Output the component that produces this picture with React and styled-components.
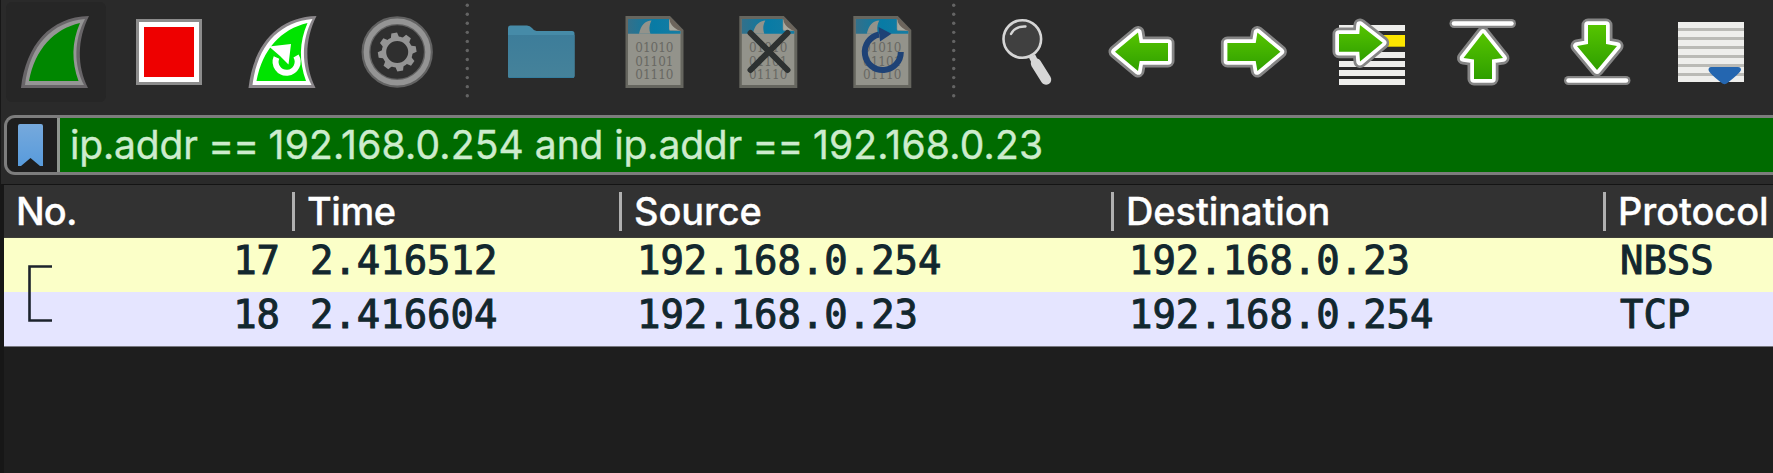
import React from 'react';
import styled, { createGlobalStyle } from 'styled-components';

const GlobalStyle = createGlobalStyle`
  * { box-sizing: border-box; }
  body { margin: 0; background: #1e1e1e; overflow: hidden; }
`;

const Window = styled.div`
  width: 1773px;
  height: 473px;
  display: flex;
  flex-direction: column;
  background: #2a2a2a;
  border-left: 1px solid #171717;
  font-family: Inter, 'Liberation Sans', sans-serif;
  overflow: hidden;
`;

const Toolbar = styled.div`
  display: flex;
  flex: 0 0 115px;
  margin-left: -1px;
`;

const Glyph = styled.svg`
  display: block;
  flex: none;
  width: ${(p) => p.$w}px;
  height: 110px;
`;

const FilterBar = styled.div`
  display: flex;
  flex: 0 0 60px;
  margin-left: 3px;
  border: 3px solid #7d7d7d;
  border-right: 0;
  border-radius: 11px 0 0 11px;
  background: #1e1e1e;
  overflow: hidden;
`;

const BookmarkButton = styled.div`
  display: flex;
  flex: 0 0 53px;
  align-items: flex-start;
  padding: 6px 0 0 11px;
  border-right: 3px solid #8f958f;
`;

const FilterInput = styled.div`
  flex: 1;
  padding: 1px 0 0 10px;
  background: #006b00;
  color: #cdeccd;
  font-size: 39px;
  line-height: 52px;
  -webkit-text-stroke: 0.4px #cdeccd;
  white-space: pre;
`;

const Token = styled.span`
  letter-spacing: ${(p) => p.$track}px;
`;

const PacketList = styled.div`
  flex: 1;
  margin-top: 9px;
  border-left: 3px solid #171717;
  border-top: 1px solid #141414;
  background: #1e1e1e;
`;

const HeaderRow = styled.div`
  display: flex;
  height: 53px;
  padding-top: 7px;
  background: #323232;
  border-bottom: 1px solid #3d3d38;
`;

const HeaderCell = styled.div`
  flex: none;
  width: ${(p) => p.$w}px;
  height: 39px;
  padding-left: ${(p) => (p.$first ? 9 : 12)}px;
  border-left: 3px solid ${(p) => (p.$first ? 'transparent' : '#b0b0b0')};
  color: #fff;
  font-size: 38px;
  font-weight: 500;
  line-height: 38px;
  letter-spacing: ${(p) => p.$track}px;
  -webkit-text-stroke: 0.3px #fff;
  white-space: nowrap;
`;

const Row = styled.div`
  display: flex;
  height: 54px;
  background: ${(p) => p.$bg};
  color: #12272e;
  font-family: 'DejaVu Sans Mono', monospace;
  font-size: 38.9px;
  line-height: 45px;
  -webkit-text-stroke: 1px #12272e;
  white-space: nowrap;
`;

const NumberCell = styled.div`
  display: flex;
  flex: none;
  justify-content: space-between;
  width: 306px;
  padding-right: 30px;
`;

const Cell = styled.div`
  flex: none;
  width: ${(p) => p.$w}px;
`;

const ListEnd = styled.div`
  height: 1px;
  background: #77777f;
`;

function Slot({ x, w, children }) {
  return <Glyph $w={w} viewBox={`${x} 0 ${w} 110`}>{children}</Glyph>;
}

function Dots({ x, w, cx }) {
  return (
    <Slot x={x} w={w}>
      {Array.from({ length: 11 }, (_, i) => (
        <circle key={i} cx={cx} cy={5.2 + i * 9.05} r="1.7" fill="#646464" />
      ))}
    </Slot>
  );
}

function Fin({ dx, rim, edge, fill }) {
  return (
    <g transform={`translate(${dx} 0)`}>
      <path d="M89 16C50 17 26 45 21 88H88C77 66 77 40 89 16Z" fill={rim} />
      <path d="M85 19C52 22 30 45 25 85H84C73.500 65 74 40 85 19Z" fill={edge} />
      <path d="M80 23C54 29 35 49 29 81H78.500C71.500 62 71.500 42 80 23Z" fill={fill} />
    </g>
  );
}

function Doc({ dx }) {
  return (
    <g transform={`translate(${dx} 0)`}>
      <path d="M625.500 16H670L683.500 30V88H625.500Z" fill="#66665f" />
      <path d="M628 19H669L680.500 31V85H628Z" fill="#93938b" />
      <path d="M628 19H669V29.500L680.500 31V33.700H628Z" fill="url(#sea)" />
      <path d="M639 33.700C641 25 645 21 651.500 20.500C649 25 649 30 650.500 33.700Z" fill="#93938b" />
      <path d="M670 17L683 30.500H670Z" fill="#6d655c" />
      <path d="M669.500 21V30.500H680C677 30 672 27 669.500 21Z" fill="#aaa99f" />
      <g fill="#686863" fontFamily="DejaVu Serif, serif" fontSize="12">
        <text x="635.300" y="52">01010</text>
        <text x="635.300" y="65.500">01101</text>
        <text x="635.300" y="79">01110</text>
      </g>
    </g>
  );
}

function OutlinedArrow({ d, transform, fill = 'url(#leafV)' }) {
  return (
    <g transform={transform} strokeLinejoin="round">
      <path d={d} fill="none" stroke="#858585" strokeWidth="13" />
      <path d={d} fill="none" stroke="#fff" strokeWidth="7.500" />
      <path d={d} fill={fill} />
    </g>
  );
}

function Defs() {
  return (
    <defs>
      <linearGradient id="leafV" x1="0" y1="0" x2="0" y2="1">
        <stop offset="0" stopColor="#56c400" />
        <stop offset="1" stopColor="#2f9f00" />
      </linearGradient>
      <linearGradient id="sea" x1="0" y1="0" x2="1" y2="0">
        <stop offset="0" stopColor="#33708a" />
        <stop offset=".5" stopColor="#087ba5" />
        <stop offset="1" stopColor="#177ca2" />
      </linearGradient>
      <linearGradient id="folderFront" x1="0" y1="0" x2="0" y2="1">
        <stop offset="0" stopColor="#3d7d9a" />
        <stop offset="1" stopColor="#45829a" />
      </linearGradient>
    </defs>
  );
}

const LEFT_ARROW = 'M1115 51.700L1138 32.500L1139.700 43H1168V61H1139.700L1138 71Z';

function Tools() {
  return (
    <Toolbar>
      <Slot x={0} w={113}>
        <Defs />
        <rect x="6" y="2" width="100" height="100" rx="6" fill="#262626" />
        <Fin dx={0} rim="#686568" edge="#959595" fill="#008700" />
      </Slot>
      <Slot x={113} w={114}>
        <rect x="136" y="19" width="66" height="66" fill="#8c8c8c" />
        <rect x="139" y="22" width="60" height="60" fill="#fff" />
        <rect x="144" y="27" width="50" height="50" fill="#ee0000" />
      </Slot>
      <Slot x={227} w={114}>
        <Fin dx={227.500} rim="#8b878b" edge="#fff" fill="#00e400" />
        <path d="M276.500 57.500A11 11 0 1 0 296 56" fill="none" stroke="#fff" strokeWidth="6" />
        <path d="M269 46.500L291 44L288.500 64.500L280 56Z" fill="#fff" />
      </Slot>
      <Slot x={341} w={114}>
        <circle cx="397.200" cy="52" r="31.200" fill="#2f2f2f" stroke="#626262" strokeWidth="9" />
        <circle cx="397.200" cy="52" r="30.800" fill="none" stroke="#949494" strokeWidth="5.500" />
        <circle cx="397.200" cy="52" r="13.200" fill="none" stroke="#949494" strokeWidth="4.400" />
        {Array.from({ length: 8 }, (_, i) => (
          <path key={i} d="M392.700 39L394.300 32.800H400.100L401.700 39Z" fill="#949494" transform={`rotate(${-9 + i * 45} 397.200 52)`} />
        ))}
      </Slot>
      <Dots x={455} w={27} cx={467.300} />
      <Slot x={482} w={116}>
        <path d="M508 28Q508 25.500 510.500 25.500H527Q530 25.500 532 28Q534 31 536.500 31H572Q574.500 31 574.500 33.500V76Q574.500 78 572.500 78H510Q508 78 508 76Z" fill="#468ba8" />
        <path d="M508 35H574.500V76Q574.500 78 572.500 78H510Q508 78 508 76Z" fill="url(#folderFront)" />
        <path d="M509 77.500H573.500" stroke="#347d9e" />
      </Slot>
      <Slot x={598} w={114}><Doc dx={0} /></Slot>
      <Slot x={712} w={114}>
        <Doc dx={113.800} />
        <path d="M750.500 33L787.500 70M787.500 33L750.500 70" stroke="#2d3131" strokeWidth="6" strokeLinecap="round" />
      </Slot>
      <Slot x={826} w={114}>
        <Doc dx={227.800} />
        <path d="M900.800 52A18 18 0 1 1 879 34.500" fill="none" stroke="#1e4276" strokeWidth="6" />
        <path d="M878.500 27L891.500 33.700L880 41.500Z" fill="#1e4276" />
      </Slot>
      <Dots x={940} w={28} cx={953.700} />
      <Slot x={968} w={116}>
        <path d="M1032 56L1035 62" stroke="#d6d6d6" strokeWidth="7" />
        <path d="M1036 63.500L1046 79.500" stroke="#d6d6d6" strokeWidth="10.500" strokeLinecap="round" />
        <circle cx="1022.300" cy="39" r="18.800" fill="#404040" stroke="#d6d6d6" strokeWidth="2.600" />
        <path d="M1011 34Q1015 26 1025.500 26.500" fill="none" stroke="#d6d6d6" strokeWidth="2.400" strokeLinecap="round" />
      </Slot>
      <Slot x={1084} w={114}><OutlinedArrow d={LEFT_ARROW} /></Slot>
      <Slot x={1198} w={114}><OutlinedArrow d={LEFT_ARROW} transform="translate(2395.400 0) scale(-1 1)" /></Slot>
      <Slot x={1312} w={114}>
        {[25, 52, 61, 70, 79].map((y) => (
          <rect key={y} x="1339" y={y} width="66" height="6" fill="#eeeeec" />
        ))}
        <rect x="1370" y="35" width="35" height="11.700" fill="#fce600" />
        <OutlinedArrow d="M1339 34H1359.300L1360 25L1382.700 42.700L1360 61.500L1359.300 51.700H1339Z" />
      </Slot>
      <Slot x={1426} w={114}>
        <path d="M1454 23.500H1511.500" stroke="#858585" strokeWidth="9" strokeLinecap="round" />
        <path d="M1454 23.500H1511.500" stroke="#fff" strokeWidth="4.500" strokeLinecap="round" />
        <OutlinedArrow d="M1483 33L1503 58L1492 59.500V79H1474V59.500L1463.500 58Z" />
      </Slot>
      <Slot x={1540} w={114}>
        <path d="M1568.500 80.500H1626" stroke="#858585" strokeWidth="9" strokeLinecap="round" />
        <path d="M1568.500 80.500H1626" stroke="#fff" strokeWidth="4.500" strokeLinecap="round" />
        <OutlinedArrow d="M1597 70L1577 46L1588 44V25H1606V44L1617 46Z" />
      </Slot>
      <Slot x={1654} w={119}>
        <rect x="1678" y="22" width="66" height="60" fill="#eeeeec" />
        {[28, 37, 46, 55, 64, 73].map((y) => (
          <rect key={y} x="1678" y={y} width="66" height="3" fill="#babab6" />
        ))}
        <path d="M1711 67H1738Q1741 67 1741 70Q1740 73 1728 82.500Q1724.500 86 1721 82.500Q1709 73 1708.500 70Q1708.500 67 1711 67Z" fill="#2466b0" />
      </Slot>
    </Toolbar>
  );
}

function Bookmark() {
  return (
    <svg width="25" height="43" viewBox="0 0 25 43">
      <defs>
        <linearGradient id="mark" x1="0" y1="0" x2="0" y2="1">
          <stop offset="0" stopColor="#76a9dc" />
          <stop offset="1" stopColor="#589bdc" />
        </linearGradient>
      </defs>
      <path d="M0 2Q0 0 2 0H23Q25 0 25 2V42H22L12.500 34L3 42H0Z" fill="url(#mark)" />
    </svg>
  );
}

function Bracket({ end }) {
  return (
    <svg width="60" height="54" viewBox="0 0 60 54">
      <path d={end ? 'M25.500 0V28.500H48' : 'M48 28.500H25.500V54'} fill="none" stroke="#1c232c" strokeWidth="2.600" />
    </svg>
  );
}

const FILTER = [
  { text: 'ip.addr', track: -0.15 },
  { text: ' == ', track: -0.7 },
  { text: '192.168.0.254', track: 0.2 },
  { text: ' and ', track: -0.1 },
  { text: 'ip.addr', track: -0.15 },
  { text: ' == ', track: -0.7 },
  { text: '192.168.0.23', track: 0.2 },
];

const COLUMNS = [
  { label: 'No.', w: 288, track: -0.9 },
  { label: 'Time', w: 327, track: -0.5 },
  { label: 'Source', w: 492, track: -0.15 },
  { label: 'Destination', w: 492, track: -0.1 },
  { label: 'Protocol', w: 180, track: -0.1 },
];

const PACKETS = [
  { no: '17', time: '2.416512', src: '192.168.0.254', dst: '192.168.0.23', proto: 'NBSS', bg: '#fbffc8' },
  { no: '18', time: '2.416604', src: '192.168.0.23', dst: '192.168.0.254', proto: 'TCP', bg: '#e5e5ff' },
];

export default function App() {
  return (
    <>
      <GlobalStyle />
      <Window>
        <Tools />
        <FilterBar>
          <BookmarkButton><Bookmark /></BookmarkButton>
          <FilterInput>
            {FILTER.map((t, i) => (
              <Token key={i} $track={t.track}>{t.text}</Token>
            ))}
          </FilterInput>
        </FilterBar>
        <PacketList>
          <HeaderRow>
            {COLUMNS.map((c, i) => (
              <HeaderCell key={c.label} $w={c.w} $first={i === 0} $track={c.track}>{c.label}</HeaderCell>
            ))}
          </HeaderRow>
          {PACKETS.map((p, i) => (
            <Row key={p.no} $bg={p.bg}>
              <NumberCell><Bracket end={i === 1} />{p.no}</NumberCell>
              <Cell $w={327}>{p.time}</Cell>
              <Cell $w={492}>{p.src}</Cell>
              <Cell $w={491}>{p.dst}</Cell>
              <Cell>{p.proto}</Cell>
            </Row>
          ))}
          <ListEnd />
        </PacketList>
      </Window>
    </>
  );
}
